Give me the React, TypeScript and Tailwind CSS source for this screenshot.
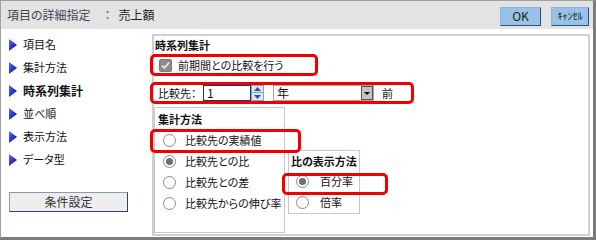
const jp = { fontFamily: '"Noto Sans CJK JP", "Noto Sans", sans-serif' };

function Tri() {
  return (
    <svg width="8" height="12" viewBox="0 0 8 12" className="shrink-0">
      <defs>
        <linearGradient id="tg" x1="0" y1="0" x2="1" y2="1">
          <stop offset="0" stopColor="#5a6cff" />
          <stop offset="1" stopColor="#000090" />
        </linearGradient>
      </defs>
      <polygon points="0,0 8,6 0,12" fill="url(#tg)" />
    </svg>
  );
}

function Radio({ on }: { on?: boolean }) {
  return (
    <svg width="13" height="13" viewBox="0 0 13 13" className="shrink-0">
      <circle cx="6.5" cy="6.5" r="6" fill="#fff" stroke="#8a8a8a" />
      {on && <circle cx="6.5" cy="6.5" r="3.6" fill="#707070" />}
    </svg>
  );
}

function RedBox({ className }: { className: string }) {
  return <div className={'absolute border-[3px] border-[#f00000] rounded-[5px] ' + className} />;
}

const navItems = ['項目名', '集計方法', '時系列集計', '並べ順', '表示方法', 'データ型'];

export default function App() {
  return (
    <div
      className="relative w-[596px] h-[240px] bg-[#e3e3e3] border-l border-t border-[#a0a0a0] border-r-[3px] border-b-[3px] border-r-[#7c7c7c] border-b-[#7c7c7c] flex flex-col text-[#111] [font-feature-settings:'palt']"
      style={jp}>
      <div className="h-[28px] flex items-center justify-between pl-[6px] pr-[4px]">
        <div className="text-[12px] flex items-center">
          <span className="text-[#3d4655]">項目の詳細指定</span>
          <span className="ml-[14px] text-[#3d4655]">：</span>
          <span className="ml-[8px] text-[#222]">売上額</span>
        </div>
        <div className="flex gap-[10px] mt-[2px]">
          <button className="w-[41px] h-[19px] bg-[#99c2e8] border border-[#8db4dc] border-r-[#2a4f7c] border-b-[#2a4f7c] text-[12px] leading-none text-[#1a1a1a] flex items-center justify-center">
            OK
          </button>
          <button className="w-[38px] h-[19px] bg-[#99c2e8] border border-[#8db4dc] border-r-[#2a4f7c] border-b-[#2a4f7c] text-[10px] leading-none text-[#1a1a1a] flex items-center justify-center">
            ｷｬﾝｾﾙ
          </button>
        </div>
      </div>

      <div className="flex-1 bg-white flex">
        <div className="w-[151px] pt-[4px] pl-[8px] flex flex-col">
          {navItems.map((t) => (
            <div key={t} className="h-[23px] flex items-center gap-[6px]">
              <Tri />
              <span className={t === '時系列集計' ? 'text-[12px] font-bold' : 'text-[11px]'}>{t}</span>
            </div>
          ))}
          <button className="mt-[21px] w-[119px] h-[20px] bg-[#eeeeee] border border-[#8a9ab0] border-r-[#2b4470] border-b-[#2b4470] text-[12px] text-[#333] flex items-center justify-center">
            条件設定
          </button>
        </div>

        <div className="mt-[5px] mr-[3px] w-[438px] h-[202px] border-2 border-[#d0d0d0] flex flex-col text-[11px]">
          <div className="h-[18px] flex items-center pl-[1px] font-bold">時系列集計</div>
          <div className="h-[22px] flex items-center pl-[5px] gap-[6px]">
            <svg width="13" height="13" viewBox="0 0 13 13" className="shrink-0">
              <rect x="0.5" y="0.5" width="12" height="12" rx="1.5" fill="#8c8c8c" stroke="#7a7a7a" />
              <polyline points="3,6.5 5.5,9 10,3.5" fill="none" stroke="#e6e6e6" strokeWidth="1.8" />
            </svg>
            <span>前期間との比較を行う</span>
          </div>
          <div className="mt-[9px] h-[16px] flex items-center pl-[4px]">
            <span className="w-[45px] whitespace-nowrap">比較先：</span>
            <div className="w-[48px] h-[16px] border border-[#1c3560] flex items-center pl-[3px] text-[12px]">1</div>
            <div className="w-[13px] h-[16px] flex flex-col">
              <div className="h-[8px] bg-[#dce6f2] border border-[#8aa4c4] flex items-center justify-center">
                <svg width="7" height="4" viewBox="0 0 7 4"><polygon points="0,4 3.5,0 7,4" fill="#1e5a9e" /></svg>
              </div>
              <div className="h-[8px] bg-[#dce6f2] border border-[#8aa4c4] border-t-0 flex items-center justify-center">
                <svg width="7" height="4" viewBox="0 0 7 4"><polygon points="0,0 3.5,4 7,0" fill="#1e5a9e" /></svg>
              </div>
            </div>
            <div className="ml-[9px] w-[101px] h-[16px] border border-[#a6a6a6] flex items-center justify-between pl-[3px]">
              <span className="text-[12px]">年</span>
              <div className="w-[12px] h-[14px] bg-[#c4c4c4] border border-[#555] flex items-center justify-center">
                <svg width="6" height="3" viewBox="0 0 6 3"><polygon points="0,0 6,0 3,3" fill="#000" /></svg>
              </div>
            </div>
            <span className="ml-[8px]">前</span>
          </div>

          <div className="mt-[6px] flex items-start gap-[3px]">
            <div className="w-[131px] h-[126px] border border-[#c8c8c8] flex flex-col">
              <div className="h-[22px] flex items-center pl-[3px] font-bold">集計方法</div>
              {['比較先の実績値', '比較先との比', '比較先との差', '比較先からの伸び率'].map((t, i) => (
                <div key={t} className="h-[21px] flex items-center pl-[8px] gap-[9px]">
                  <Radio on={i === 1} />
                  <span className="whitespace-nowrap">{t}</span>
                </div>
              ))}
            </div>
            <div className="mt-[43px] w-[72px] h-[64px] border border-[#c8c8c8] flex flex-col">
              <div className="h-[20px] flex items-center pl-[2px] font-bold whitespace-nowrap">比の表示方法</div>
              {['百分率', '倍率'].map((t, i) => (
                <div key={t} className="h-[21px] flex items-center pl-[7px] gap-[11px]">
                  <Radio on={i === 0} />
                  <span>{t}</span>
                </div>
              ))}
            </div>
          </div>
        </div>
      </div>

      <RedBox className="left-[149px] top-[53px] w-[168px] h-[22px]" />
      <RedBox className="left-[149px] top-[81px] w-[264px] h-[22px]" />
      <RedBox className="left-[149px] top-[128px] w-[151px] h-[24px]" />
      <RedBox className="left-[281px] top-[172px] w-[106px] h-[22px]" />
    </div>
  );
}
